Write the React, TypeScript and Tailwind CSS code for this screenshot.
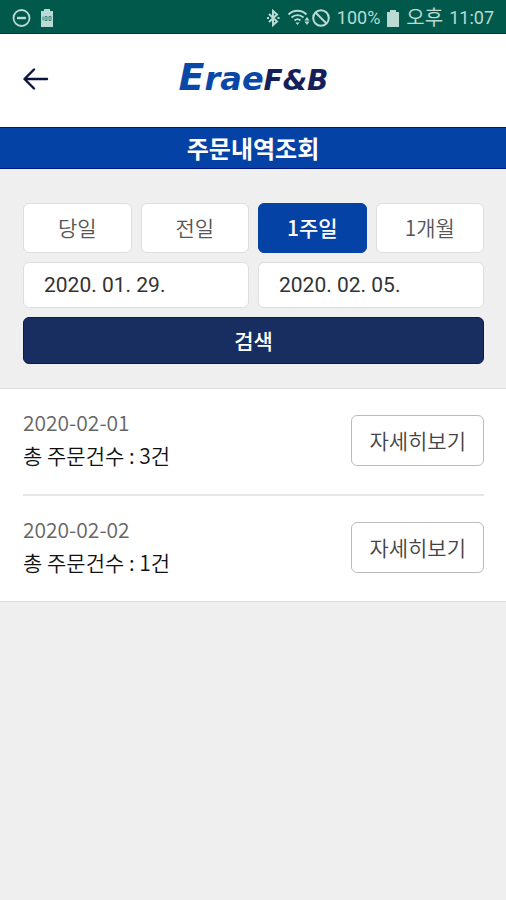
import React from 'react'

const periods = [
  { id: 1, name: '당일' },
  { id: 2, name: '전일' },
  { id: 3, name: '1주일' },
  { id: 4, name: '1개월' },
];

const orders = [
  { id: 1, date: '2020-02-01', count: 3 },
  { id: 2, date: '2020-02-02', count: 1 },
];

function StatusBar() {
  return (
    <div className="flex h-[34px] items-center justify-between border-b border-[#063f2c] bg-[#00594b] px-3 pt-[3px] text-[#b9dbd4]">
      <div className="flex items-center gap-2">
        {/* Do not disturb */}
        <svg width="20" height="20" viewBox="0 0 20 20" fill="none" stroke="currentColor">
          <circle cx="9.5" cy="10" r="8" strokeWidth="1.8" />
          <path d="M5 10h9" strokeWidth="2.4" />
        </svg>
        {/* Battery saver */}
        <svg width="14" height="20" viewBox="0 0 14 20">
          <path d="M1 3h3V1h6v2h3v16H1z" fill="currentColor" />
          <path d="M3 8.5v4M5 8.5h2v4H5zM9 8.5h2v4H9z" fill="none" stroke="#3f8578" strokeWidth="1" />
        </svg>
      </div>
      <div className="flex items-center gap-1.5 font-[Roboto,'Noto_Sans_CJK_KR',sans-serif] text-lg leading-6">
        {/* Bluetooth */}
        <svg width="16" height="20" viewBox="0 0 16 20" fill="none" stroke="currentColor" strokeWidth="2">
          <path d="M4 6l8 7.500L8 17V3L12 6.500 4 14" />
          <path d="M2 10h2M12.500 10h2" />
        </svg>
        <div className="flex items-center">
          {/* Wifi */}
          <svg width="24" height="20" viewBox="0 0 24 20" fill="none" stroke="currentColor" strokeWidth="1.8">
            <path d="M1.500 6.500c5-5 13-5 18 0M4.500 9.500c3.500-3.300 8.500-3.300 12 0M7.500 12.500c2-1.800 4-1.800 6 0" />
            <path d="M8.500 14.500h4l-2 2.500z" fill="currentColor" stroke="none" />
            <path d="M20 9l2.500 3.500h-5zM20 17l2.500-3.500h-5z" fill="currentColor" stroke="none" />
          </svg>
          {/* Blocked */}
          <svg width="20" height="20" viewBox="0 0 20 20" fill="none" stroke="currentColor" strokeWidth="2">
            <circle cx="10" cy="10" r="7.800" />
            <path d="M4.500 4.500l11 11" />
          </svg>
        </div>
        <span>100%</span>
        <svg width="14" height="20" viewBox="0 0 14 20">
          <path d="M1 4h3V2h6v2h3v15H1z" fill="currentColor" />
        </svg>
        <span className="text-xl leading-6">오후</span>
        <span>11:07</span>
      </div>
    </div>
  )
}

function Header() {
  return (
    <header className="grid h-[93px] grid-cols-[1fr_auto_1fr] items-center bg-white pr-[22px] pb-1 pl-[23px]">
      <button type="button" aria-label="뒤로" className="w-7">
        <svg width="28" height="24" viewBox="0 0 28 24" fill="none" stroke="#0b1440" strokeWidth="2.4" strokeLinecap="round" strokeLinejoin="round">
          <path d="M24 12H2M11 2.500L1.500 12l9.500 9.500" />
        </svg>
      </button>
      <a href="#" className="flex items-baseline font-['DejaVu_Sans',sans-serif] leading-10 font-bold text-[#0a48a8] italic">
        <span className="text-[38px]">E</span>
        <span className="text-[32px]">rae</span>
        <span className="text-[28px] text-[#141f5c]">F&amp;B</span>
      </a>
    </header>
  )
}

function App() {
  return (
    <div className="min-h-screen bg-[#efefef] font-['Noto_Sans_CJK_KR',sans-serif]">
      <StatusBar />
      <Header />
      <h1 className="border-y border-[#02147f] bg-[#0442a6] text-center text-2xl leading-10 font-bold text-white">
        주문내역조회
      </h1>

      {/* Search */}
      <form className="flex flex-col gap-[9px] pt-[34px] pr-[22px] pb-6 pl-[23px]">
        <div className="grid grid-cols-4 gap-[9px]">
          {periods.map((period) => (
            <button
              key={period.id}
              type="button"
              className={
                period.id === 3
                  ? 'h-[50px] rounded-md border border-[#0442a6] bg-[#0442a6] text-[21px] font-medium text-white'
                  : 'h-[50px] rounded-md border border-[#dedede] bg-white text-[21px] font-[350] text-[#555]'
              }
            >
              {period.name}
            </button>
          ))}
        </div>
        <div className="grid grid-cols-2 gap-[9px] font-[Roboto,sans-serif] text-[21px] text-[#333]">
          <input type="text" aria-label="시작일" defaultValue="2020. 01. 29." className="h-[46px] w-full rounded-md border border-[#dedede] bg-white px-5" />
          <input type="text" aria-label="종료일" defaultValue="2020. 02. 05." className="h-[46px] w-full rounded-md border border-[#dedede] bg-white px-5" />
        </div>
        <button type="submit" className="h-[47px] rounded-md border border-[#0a1a50] bg-[#182d60] text-[21px] font-medium text-white">
          검색
        </button>
      </form>

      {/* Orders */}
      <ul className="border-y border-[#dcdcdc] bg-white pr-[22px] pl-[23px]">
        {orders.map((order) => (
          <li key={order.id} className="flex items-center justify-between border-b-2 border-[#e6e6e6] pt-[17px] pb-[19px] last:border-b-0">
            <div className="pb-[3px] text-[21px] leading-[33px] font-[350]">
              <p className="text-[#666]">{order.date}</p>
              <p className="text-[#111]">총 주문건수 : {order.count}건</p>
            </div>
            <button type="button" className="h-[51px] rounded-md border border-[#bbb] px-[17px] text-[21px] font-[350] text-[#444]">
              자세히보기
            </button>
          </li>
        ))}
      </ul>
    </div>
  )
}

export default App
